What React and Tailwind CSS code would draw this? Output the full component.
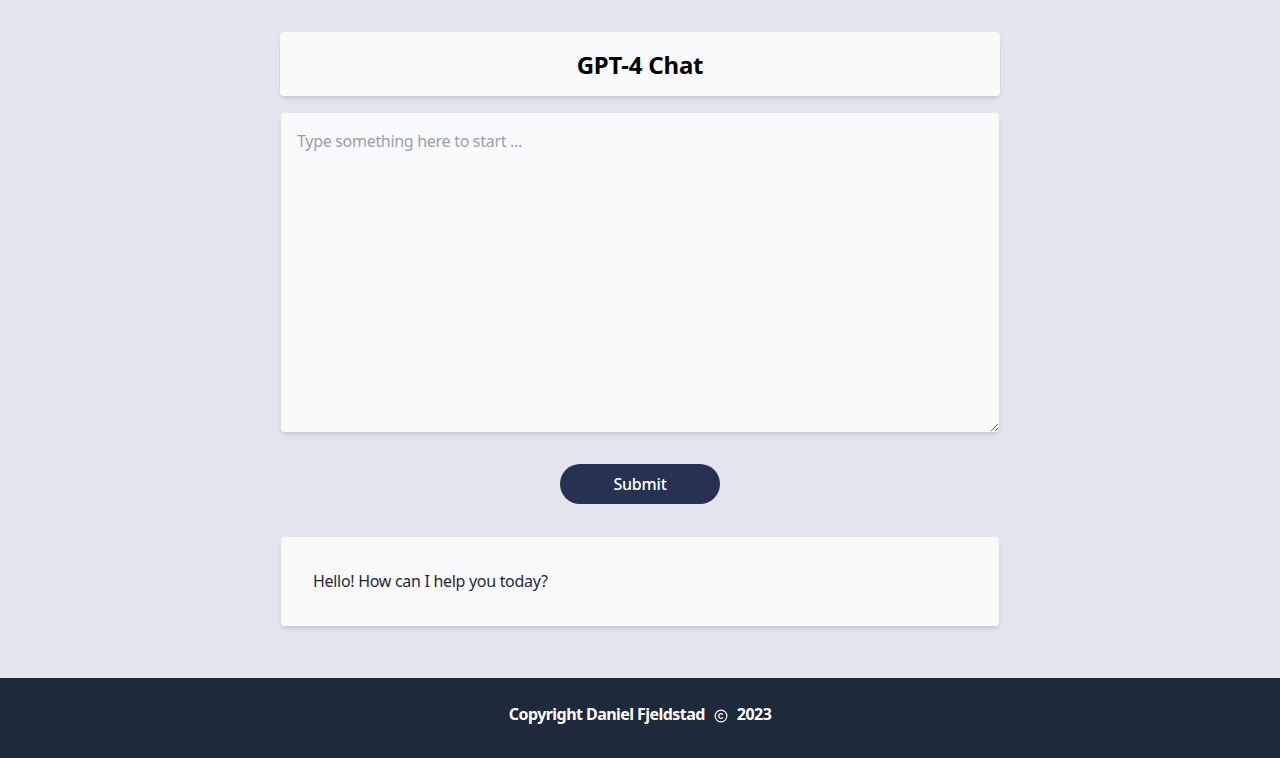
import React, { useState } from 'react';
import { Copyright } from 'lucide-react';

const App = () => {
  const [prompt, setPrompt] = useState('');
  const [reply] = useState('Hello! How can I help you today?');

  return (
    <div
      className="flex flex-col min-h-screen bg-[#e3e6ee]"
      style={{ fontFamily: '"Noto Sans", "Open Sans", sans-serif' }}
    >
      <main className="flex-1 flex flex-col items-center pt-8">
        <div className="w-[720px] flex flex-col">
          {/* Title */}
          <div className="h-16 pt-0.5 flex items-center justify-center bg-gray-50 rounded shadow-md">
            <h1 className="text-2xl font-bold text-black tracking-[-0.2px]">GPT-4 Chat</h1>
          </div>

          {/* Prompt */}
          <textarea
            value={prompt}
            onChange={(e) => setPrompt(e.target.value)}
            placeholder="Type something here to start ..."
            className="mx-px mt-[17px] h-[319px] p-4 bg-gray-50 rounded shadow-md text-base tracking-[-0.3px] text-gray-800 placeholder:text-gray-400 outline-none"
          />

          {/* Submit */}
          <div className="flex justify-center mt-8">
            <button className="w-40 h-10 rounded-full bg-[#283151] text-white text-base font-medium tracking-[-0.2px]">
              Submit
            </button>
          </div>

          {/* Response */}
          <div className="mx-px mt-[33px] px-8 pt-8 pb-[33px] bg-gray-50 rounded shadow-md text-base tracking-[-0.3px] text-gray-800">
            {reply}
          </div>
        </div>
      </main>

      <footer className="h-20 mt-[51px] pb-2 flex items-center justify-center bg-gray-800 text-white font-bold text-base tracking-[-0.55px]">
        <span>Copyright Daniel Fjeldstad</span>
        <Copyright size={14} strokeWidth={2} className="ml-[9px] mr-[9px] mt-1" />
        <span>2023</span>
      </footer>
    </div>
  );
};

export default App;
